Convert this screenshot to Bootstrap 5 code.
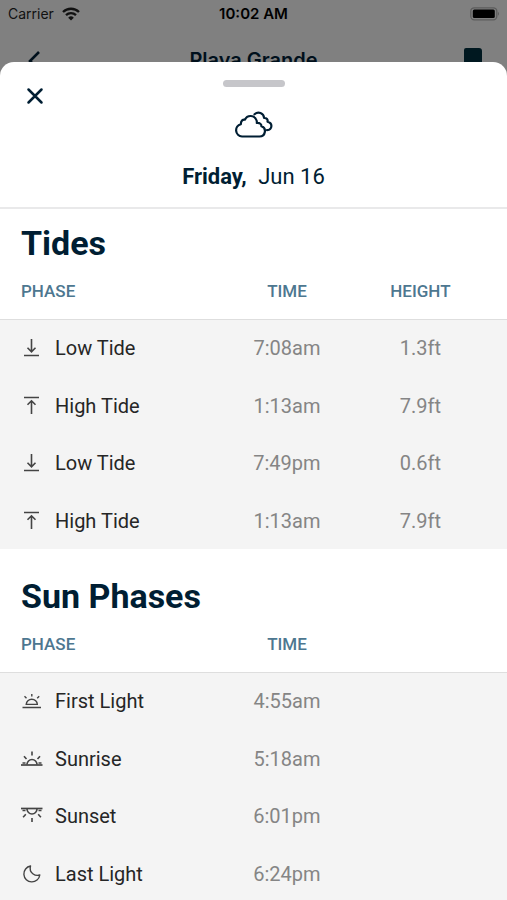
<!DOCTYPE html>
<html lang="en">
<head>
<meta charset="utf-8">
<meta name="viewport" content="width=device-width, initial-scale=1">
<title>Tides and Sun Phases</title>
<link href="https://cdn.jsdelivr.net/npm/bootstrap@5.3.0/dist/css/bootstrap.min.css" rel="stylesheet">
<style>
  body { font-family: Roboto, "Liberation Sans", sans-serif; background: #808080; color: #222; }
  .screen { height: 100vh; overflow: hidden; }
  .behind { font-family: Inter, "Liberation Sans", sans-serif; color: #00101c; }
  .status-bar { height: 28px; font-size: 14px; line-height: 28px; padding: 0 8px; color: #111; }
  .status-bar strong { font-size: 15px; font-weight: 600; color: #000; }
  .top-bar { height: 64px; padding: 0 24px; }
  .top-title { font-size: 20px; line-height: 24px; font-weight: 600; margin: 0; }
  .plain-btn { border: 0; background: none; padding: 0; display: flex; color: inherit; }
  .sheet { position: relative; margin-top: -30px; min-height: calc(100vh - 62px); background: #fff; border-radius: 14px 14px 0 0; }
  .sheet-head { height: 147px; border-bottom: 2px solid #e9e9ea; color: #001e33; }
  .grabber { width: 62px; height: 7px; border-radius: 4px; background: #c6c6ca; margin: 18px auto 0; }
  .close-btn { position: absolute; left: 26px; top: 25px; color: #001e33; }
  .cloud { margin-top: 24px; }
  .day { font-size: 22px; line-height: 28px; margin: 24px 0 0; }
  .day b { margin-right: 6px; font-weight: 700; }
  .group-title { font-size: 34px; line-height: 40px; font-weight: 700; color: #001e33; margin: 0; padding: 14px 21px 0; }
  .phases { width: 100%; table-layout: fixed; border-collapse: collapse; margin-bottom: 13px; }
  .phases th, .phases td { text-align: center; padding: 0; }
  .phases th:first-child, .phases td:first-child { text-align: left; padding-left: 21px; }
  .phases th:last-child, .phases td:last-child { padding-right: 20px; }
  .phases thead th { height: 56px; font-size: 17px; line-height: 20px; font-weight: 500; color: #4d7790; }
  .phases tbody { background: #f4f4f4; border-top: 1px solid #dedede; font-size: 20px; line-height: 24px; }
  .phases tbody tr { height: 57px; }
  .phases tbody tr:nth-child(odd) { height: 58px; }
  .phases tbody td { color: #858585; }
  .phases tbody td:first-child { color: #262626; }
  .c-phase { width: 43.4%; }
  .c-time { width: 26.4%; }
  .ico { width: 22px; height: 22px; margin-right: 12px; flex: none; color: #444; }
  svg { fill: none; stroke: currentColor; }
</style>
</head>
<body>
<svg class="d-none" aria-hidden="true">
  <symbol id="low" viewBox="0 0 22 22"><path d="M3 18.5h15M10.500 2v12.500M6.500 10.800l4 4 4-4" stroke-width="1.6"/></symbol>
  <symbol id="high" viewBox="0 0 22 22"><path d="M3 2.500h15M10.500 19V6M6.500 9.800l4-4 4 4" stroke-width="1.6"/></symbol>
  <symbol id="first" viewBox="0 0 22 22"><path d="M1.500 17.500h18.500M4.500 14.400h12.500M5.300 14.200a5.500 5 0 0 1 11 0M10.800 4v2.500M3.500 6.200l2 2M18.200 6.200l-2 2" stroke-width="1.4"/></symbol>
  <symbol id="rise" viewBox="0 0 22 22"><path d="M0 17h21.500" stroke-width="1.700"/><path d="M6 16.500a5 5 0 0 1 10 0M11 3.500v4M3 8.200l2.500 2.900M19 8.200l-2.500 2.900M1.500 15h3M17.500 15h3" stroke-width="1.600"/></symbol>
  <symbol id="set" viewBox="0 0 22 22"><path d="M0 3.500h21.500" stroke-width="1.700"/><path d="M6 4a5 5 0 0 0 10 0M11 13v4M4.800 9.200l-2.700 3M17.200 9.200l2.700 3M1.500 5.500h3M17.500 5.500h3" stroke-width="1.600"/></symbol>
  <symbol id="moon" viewBox="0 0 22 22"><path d="M9.500 3a8 8 0 1 0 9.300 9C14.500 13.500 7.500 10 9.500 3z" stroke-width="1.400" stroke-linejoin="round"/></symbol>
</svg>

<div class="screen">
  <div class="behind">
    <div class="status-bar row g-0">
      <div class="col d-flex align-items-center gap-2"><span>Carrier</span>
        <svg width="18" height="14" viewBox="0 0 18 14" aria-label="Wi-Fi" role="img" stroke-width="2.300"><path d="M1 5a11.500 11.500 0 0 1 16 0M4 8.200a7.200 7.200 0 0 1 10 0"/><path d="M9 13.500 6.200 10.700a4 4 0 0 1 5.600 0z" fill="currentColor" stroke="none"/></svg>
      </div>
      <strong class="col-auto">10:02 AM</strong>
      <div class="col d-flex align-items-center justify-content-end">
        <svg width="31" height="14" viewBox="0 0 31 14" aria-label="Battery full" role="img"><rect x="2.800" y=".8" width="26" height="12" rx="3.500" stroke="#5c5c5c" stroke-width="1.300"/><rect x="4.800" y="2.600" width="22" height="8.400" rx="1.500" fill="#000" stroke="none"/><path d="M30 4.800q2 2 0 4z" fill="#5c5c5c" stroke="none"/></svg>
      </div>
    </div>
    <nav class="top-bar d-flex align-items-center justify-content-between" aria-label="Location">
      <button class="plain-btn" aria-label="Back"><svg width="20" height="20" viewBox="0 0 20 20" stroke-width="2.600"><path d="M15 2 6 11l9 9"/></svg></button>
      <h1 class="top-title">Playa Grande</h1>
      <button class="plain-btn" aria-label="Save"><svg width="20" height="26" viewBox="0 0 20 26"><path d="M1 26V3q0-2 2-2h13q3 0 3 3v22l-9-6z" fill="#001820" stroke="none"/></svg></button>
    </nav>
  </div>

  <main class="sheet">
    <button class="plain-btn close-btn" aria-label="Close"><svg width="18" height="18" viewBox="0 0 18 18" stroke-width="2.500" stroke-linecap="round"><path d="M2.500 2.500l13 13M15.500 2.500l-13 13"/></svg></button>
    <header class="sheet-head d-flex flex-column align-items-center">
      <div class="grabber"></div>
      <svg class="cloud" width="40" height="28" viewBox="0 0 40 28" stroke-width="2.200" stroke-linecap="round" stroke-linejoin="round" aria-label="Cloudy" role="img"><path d="M8 25.500a6.200 6.200 0 0 1-1.200-12.200C6.800 9.500 9 8.200 11 8.700 13 3.800 20.500 3.500 22.600 9.500q.4 1.200.2 2.500c3-.4 4.800 1.300 4.600 3.300 5.500 1.500 4.300 10.200-1.900 10.200z"/><path d="M20.500 3.300c3.500-3.300 9.300-1.400 9.600 3.700 2.600-.2 4 1.700 3.400 3.700 5.500 1.300 5 8-.5 8.500"/></svg>
      <p class="day"><b>Friday,</b> Jun 16</p>
    </header>

    <section>
      <h2 class="group-title">Tides</h2>
      <table class="phases">
        <colgroup><col class="c-phase"><col class="c-time"><col></colgroup>
        <thead><tr><th scope="col">PHASE</th><th scope="col">TIME</th><th scope="col">HEIGHT</th></tr></thead>
        <tbody>
          <tr><td><div class="d-flex align-items-center"><svg class="ico"><use href="#low"/></svg>Low Tide</div></td><td>7:08am</td><td>1.3ft</td></tr>
          <tr><td><div class="d-flex align-items-center"><svg class="ico"><use href="#high"/></svg>High Tide</div></td><td>1:13am</td><td>7.9ft</td></tr>
          <tr><td><div class="d-flex align-items-center"><svg class="ico"><use href="#low"/></svg>Low Tide</div></td><td>7:49pm</td><td>0.6ft</td></tr>
          <tr><td><div class="d-flex align-items-center"><svg class="ico"><use href="#high"/></svg>High Tide</div></td><td>1:13am</td><td>7.9ft</td></tr>
        </tbody>
      </table>
    </section>

    <section>
      <h2 class="group-title">Sun Phases</h2>
      <table class="phases">
        <colgroup><col class="c-phase"><col class="c-time"><col></colgroup>
        <thead><tr><th scope="col">PHASE</th><th scope="col">TIME</th><td></td></tr></thead>
        <tbody>
          <tr><td><div class="d-flex align-items-center"><svg class="ico"><use href="#first"/></svg>First Light</div></td><td>4:55am</td><td></td></tr>
          <tr><td><div class="d-flex align-items-center"><svg class="ico"><use href="#rise"/></svg>Sunrise</div></td><td>5:18am</td><td></td></tr>
          <tr><td><div class="d-flex align-items-center"><svg class="ico"><use href="#set"/></svg>Sunset</div></td><td>6:01pm</td><td></td></tr>
          <tr><td><div class="d-flex align-items-center"><svg class="ico"><use href="#moon"/></svg>Last Light</div></td><td>6:24pm</td><td></td></tr>
        </tbody>
      </table>
    </section>
  </main>
</div>
<script src="https://cdn.jsdelivr.net/npm/bootstrap@5.3.0/dist/js/bootstrap.bundle.min.js"></script>
</body>
</html>
